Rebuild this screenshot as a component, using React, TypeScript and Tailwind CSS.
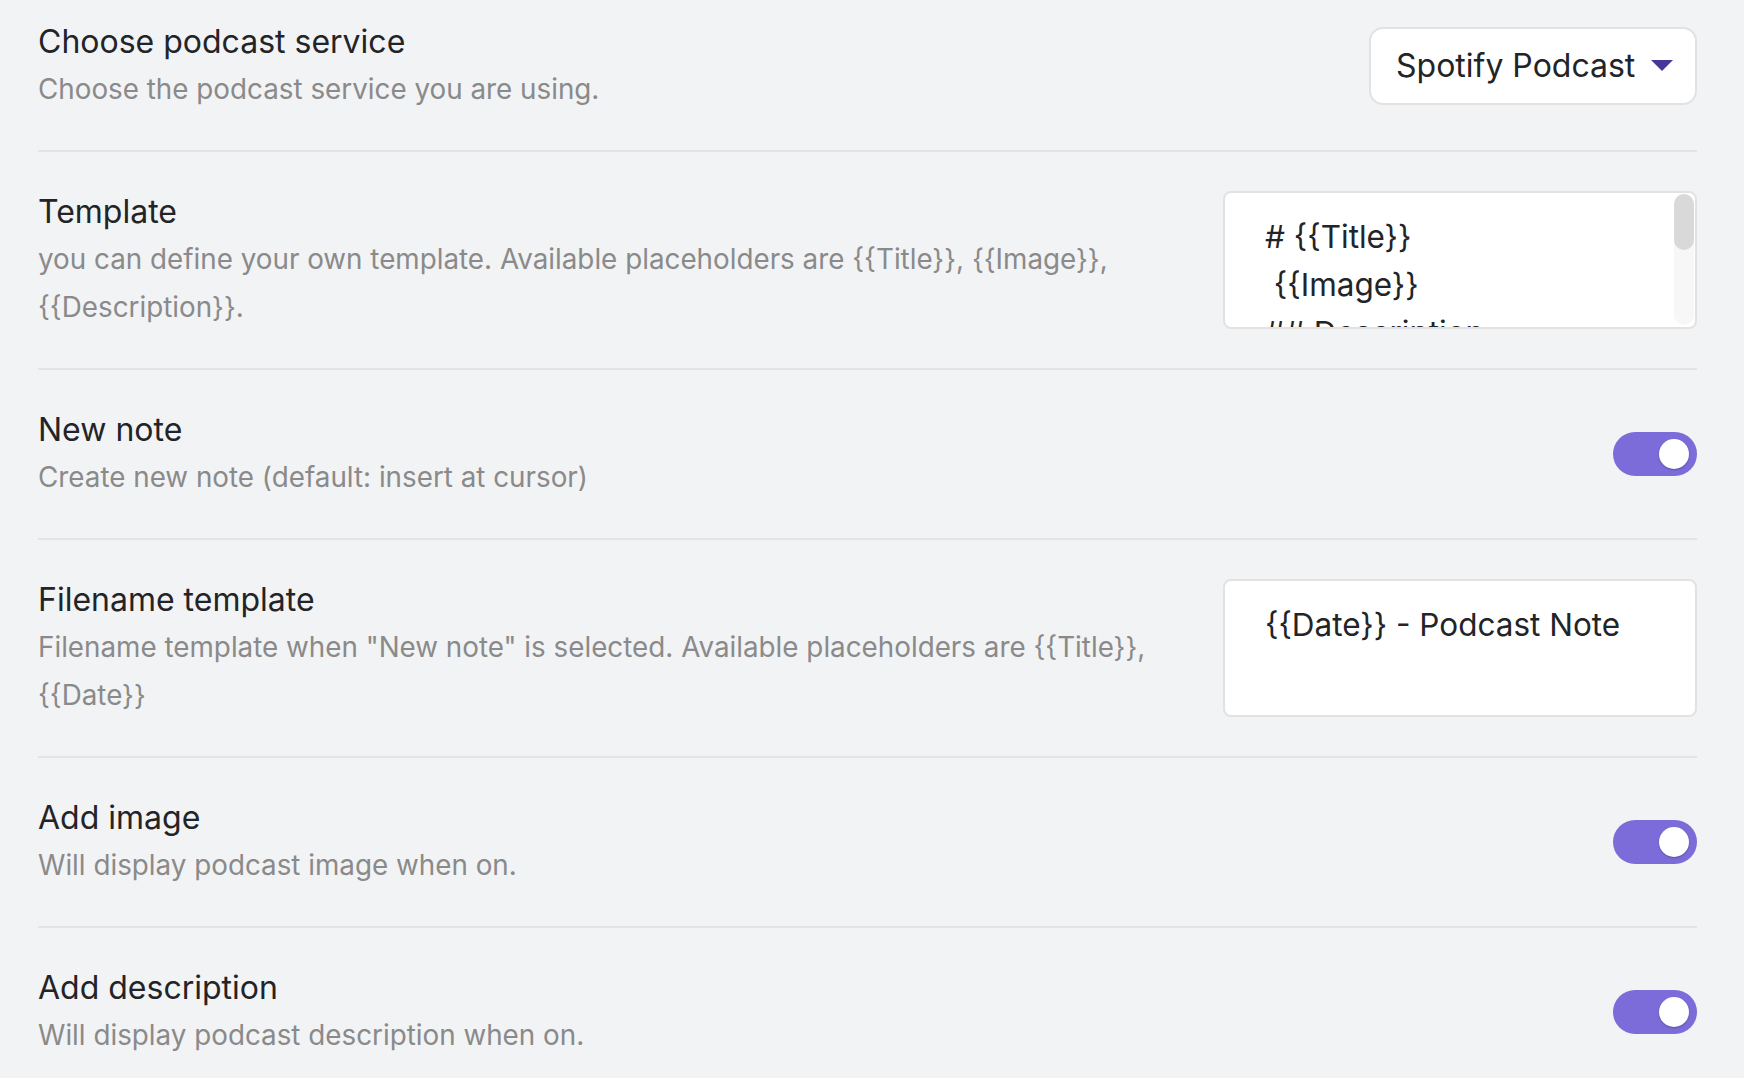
import React from "react";

const font = { fontFamily: "Inter, 'Noto Sans', sans-serif" };

function Toggle() {
  return (
    <div className="relative h-[44px] w-[84px] shrink-0 rounded-full bg-[#7b6cd9]">
      <div className="absolute right-[8px] top-[7px] h-[30px] w-[30px] rounded-full bg-white shadow-[0_1px_2px_rgba(0,0,0,0.25)]" />
    </div>
  );
}

function Row({
  name,
  desc,
  first,
  children,
}: {
  name: string;
  desc: React.ReactNode;
  first?: boolean;
  children: React.ReactNode;
}) {
  return (
    <div
      className={
        "flex items-center justify-between gap-10 " +
        (first ? "pt-[19px] pb-[37px]" : "border-t-2 border-[#e3e4e6] pt-[37px] pb-[37px]")
      }
    >
      <div className="flex min-w-0 flex-1 flex-col">
        <div className="text-[32px] leading-[46px] text-[#222428]">{name}</div>
        <div className="text-[27.8px] leading-[48px] text-[#8a8a8a]">{desc}</div>
      </div>
      {children}
    </div>
  );
}

function TextBox({ lines, scroll }: { lines: string[]; scroll?: boolean }) {
  return (
    <div className="relative h-[138px] w-[474px] shrink-0 overflow-hidden rounded-[8px] border-2 border-[#e2e2e2] bg-white pl-[40px] pt-[20px]">
      {lines.map((l, i) => (
        <div key={i} className="whitespace-pre text-[31.5px] leading-[48px] text-[#222428]">
          {l}
        </div>
      ))}
      {scroll && (
        <div className="absolute bottom-[2px] right-[1px] top-[1px] w-[20px] rounded-[10px] bg-[#f7f7f7]">
          <div className="h-[56px] w-[20px] rounded-[10px] bg-[#d9d9d9]" />
        </div>
      )}
    </div>
  );
}

export default function App() {
  return (
    <div className="min-h-screen bg-[#f2f3f5] pl-[38px] pr-[47px]" style={font}>
      <Row first name="Choose podcast service" desc="Choose the podcast service you are using.">
        <div className="flex h-[78px] w-[328px] shrink-0 items-center justify-between rounded-[14px] border-2 border-[#e2e2e2] bg-white pl-[25px] pr-[22px]">
          <span className="text-[32px] text-[#222428]">Spotify Podcast</span>
          <svg width="22" height="12" viewBox="0 0 22 12">
            <path d="M0 0 H22 L11 11 Z" fill="#483699" />
          </svg>
        </div>
      </Row>
      <Row
        name="Template"
        desc={
          <>
            you can define your own template. Available placeholders are {"{{Title}}"}, {"{{Image}}"},
            <br />
            {"{{Description}}"}.
          </>
        }
      >
        <TextBox scroll lines={["# {{Title}}", " {{Image}}", "## Description:"]} />
      </Row>
      <Row name="New note" desc="Create new note (default: insert at cursor)">
        <Toggle />
      </Row>
      <Row
        name="Filename template"
        desc={
          <>
            Filename template when "New note" is selected. Available placeholders are {"{{Title}}"},
            <br />
            {"{{Date}}"}
          </>
        }
      >
        <TextBox lines={["{{Date}} - Podcast Note"]} />
      </Row>
      <Row name="Add image" desc="Will display podcast image when on.">
        <Toggle />
      </Row>
      <Row name="Add description" desc="Will display podcast description when on.">
        <Toggle />
      </Row>
    </div>
  );
}
